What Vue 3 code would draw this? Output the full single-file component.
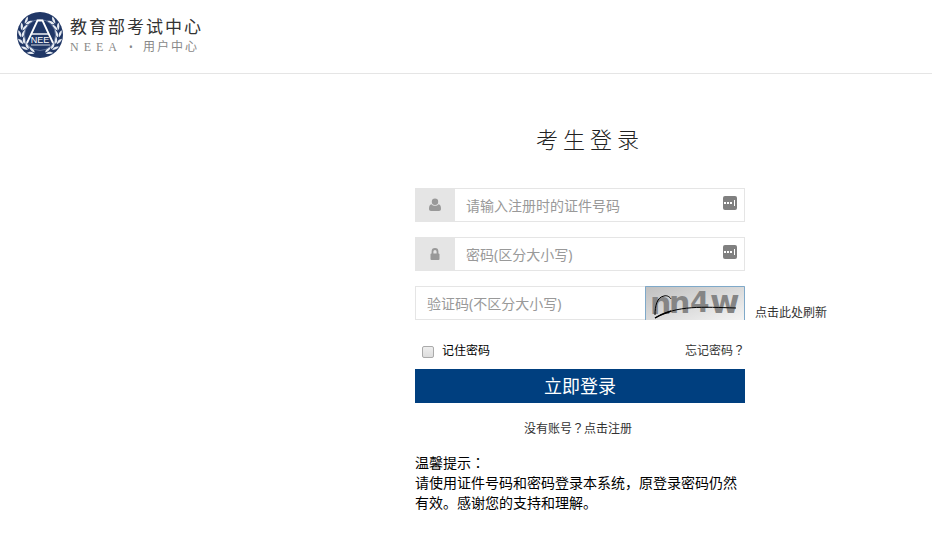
<script setup>
    import { ref } from 'vue';

    const account = ref('');
    const password = ref('');
    const captcha = ref('');
    const remember = ref(false);

    // leaves of the wreath, mirrored on both sides of the emblem
    const leaves = [-46, -24, -2, 20, 42, 64];
</script>

<template>
    <header class="header">
        <a class="brand" href="#">
            <svg class="emblem" viewBox="0 0 46 46" aria-hidden="true">
                <circle cx="23" cy="23" r="23" fill="#203766" />
                <g v-for="side in [1, -1]" :key="side" :transform="side == 1 ? '' : 'translate(46 0) scale(-1 1)'" fill="#e6ebf2">
                    <g v-for="angle in leaves" :key="angle" :transform="'rotate(' + angle + ' 23 23)'">
                        <path d="M41 26C38 24 38 21 38 18C40 20 42 22 41 26Z" />
                        <path d="M42 26C41 22 43 20 45 19C45 22 44 24 42 26Z" />
                    </g>
                </g>
                <circle cx="23" cy="23" r="15.5" fill="#203766" stroke="#6f80a5" stroke-width="0.8" />
                <path d="M10 31L20.5 8.5H25.5L36 31" fill="none" stroke="#fff" stroke-width="1.8" />
                <path d="M15 22H31" fill="none" stroke="#fff" stroke-width="1.4" />
                <path d="M14 33H33" fill="none" stroke="#fff" stroke-width="0.8" />
                <text class="emblem-text" x="23" y="31" text-anchor="middle">NEE</text>
            </svg>
            <span class="brand-text">
                <span class="brand-name">教育部考试中心</span>
                <span class="brand-sub"><span class="latin">NEEA</span><span class="dot">•</span><span class="cjk">用户中心</span></span>
            </span>
        </a>
    </header>

    <main class="page">
        <form class="login" @submit.prevent>
            <h1 class="title">考生登录</h1>

            <div class="field">
                <label class="addon" for="account" aria-label="证件号码">
                    <svg class="icon" viewBox="0 0 14 14"><circle cx="6" cy="3.8" r="3.2" /><path d="M2.5 6.2C4 8.2 8 8.2 9.5 6.2C11.5 6.5 12 8.5 12 11C12 12.2 11.2 13 10 13H2C.8 13 0 12.2 0 11C0 8.5 .5 6.5 2.5 6.2Z" /></svg>
                </label>
                <input id="account" v-model="account" type="text" placeholder="请输入注册时的证件号码">
                <svg class="manager" viewBox="0 0 14 14"><rect width="14" height="14" rx="2" /><path d="M1 6h2v2H1zM4 6h2v2H4zM7 6h2v2H7zM11 4h1v6h-1z" fill="#fff" /></svg>
            </div>

            <div class="field">
                <label class="addon" for="password" aria-label="密码">
                    <svg class="icon" viewBox="0 0 14 14"><path d="M3.5 7V4.5a2.5 2.5 0 0 1 5 0V7" fill="none" stroke="#999" stroke-width="1.8" /><rect x="1.5" y="6.5" width="9" height="6.5" rx="1" /></svg>
                </label>
                <input id="password" v-model="password" type="password" placeholder="密码(区分大小写)">
                <svg class="manager" viewBox="0 0 14 14"><rect width="14" height="14" rx="2" /><path d="M1 6h2v2H1zM4 6h2v2H4zM7 6h2v2H7zM11 4h1v6h-1z" fill="#fff" /></svg>
            </div>

            <div class="captcha-row">
                <div class="field">
                    <input v-model="captcha" type="text" aria-label="验证码" placeholder="验证码(不区分大小写)">
                    <svg class="captcha" viewBox="0 0 100 34">
                        <defs>
                            <linearGradient id="shade" x1="0" y1="0" x2="1" y2="1">
                                <stop offset="0" stop-color="#bfbfbf" />
                                <stop offset="1" stop-color="#f4f4f4" />
                            </linearGradient>
                        </defs>
                        <rect width="100" height="34" fill="url(#shade)" />
                        <path d="M.5 34V.5H99.5V34" fill="none" stroke="#7fa9c9" />
                        <g class="captcha-text">
                            <text x="5" y="28">n</text>
                            <text x="24" y="27">n</text>
                            <text class="digit" x="45" y="26">4</text>
                            <text class="wide" x="65" y="27">w</text>
                        </g>
                        <path d="M10 29C10 20 12 11 19 10C22 9 25 11 26 13" fill="none" stroke="#000" />
                        <path d="M10 32C32 19 58 21 91 22" fill="none" stroke="#000" />
                        <path d="M10 32C16 28 21 27 26 25" fill="none" stroke="#000" stroke-width="1.5" />
                    </svg>
                </div>
                <a class="refresh" href="#">点击此处刷新</a>
            </div>

            <div class="options">
                <label class="remember"><input v-model="remember" type="checkbox">记住密码</label>
                <a href="#">忘记密码<span class="mark">？</span></a>
            </div>

            <button class="submit" type="submit">立即登录</button>
            <p class="register"><a href="#">没有账号<span class="mark">？</span>点击注册</a></p>

            <div class="tips">
                <p>温馨提示<span class="mark">：</span></p>
                <p>请使用证件号码和密码登录本系统，原登录密码仍然有效。感谢您的支持和理解。</p>
            </div>
        </form>
    </main>
</template>

<style>
    body {
        background: #fff;
        font-family: "Noto Sans", "Noto Sans CJK SC", sans-serif;
        font-size: 12px;
        color: #000;
    }
</style>

<style scoped>
    * {
        box-sizing: border-box;
    }

    a {
        color: #333;
        text-decoration: none;
    }

    p {
        margin: 0;
    }

    /* full-width punctuation centred in its box */
    .mark {
        font-family: "Noto Sans CJK TC", sans-serif;
        line-height: 1;
    }

    .header {
        display: flex;
        padding: 12px 17px 15px;
        border-bottom: 1px solid #e5e5e5;
    }

    .brand {
        display: flex;
        gap: 7px;
    }

    .emblem {
        width: 46px;
        height: 46px;
    }

    .emblem-text {
        font: 9px "Liberation Sans", sans-serif;
        fill: #fff;
    }

    .brand-text {
        display: flex;
        flex-direction: column;
        padding-top: 4px;
    }

    .brand-name {
        font-size: 17px;
        line-height: 22px;
        letter-spacing: 2px;
        white-space: nowrap;
        color: #333;
    }

    .brand-sub {
        display: flex;
        gap: 7px;
        font-size: 12px;
        line-height: 18px;
        color: #888;
    }

    .brand-sub .latin {
        font-family: "Liberation Serif", serif;
        letter-spacing: 5px;
    }

    .brand-sub .dot {
        width: 7px;
        font-size: 10px;
    }

    .brand-sub .cjk {
        font-size: 12px;
        letter-spacing: 2px;
    }

    .page {
        display: flex;
        justify-content: flex-end;
        padding: 49px 187px 40px 20px;
    }

    .login {
        width: 330px;
    }

    .title {
        margin: 0 0 33px;
        padding-left: 20px;
        font-size: 22px;
        font-weight: 300;
        line-height: 32px;
        letter-spacing: 5px;
        text-align: center;
        color: #222;
    }

    .field {
        position: relative;
        display: flex;
        width: 100%;
        height: 34px;
        flex: none;
        margin-bottom: 15px;
        border: 1px solid #e5e5e5;
    }

    .field input {
        flex: 1;
        min-width: 0;
        padding: 0 11px;
        border: 0;
        outline: 0;
        background: transparent;
        font: inherit;
        font-size: 14px;
        color: #333;
    }

    .field input::placeholder {
        color: #999;
        opacity: 1;
    }

    .addon {
        display: flex;
        align-items: center;
        justify-content: center;
        width: 39px;
        background: #e5e5e5;
    }

    .icon {
        width: 14px;
        height: 14px;
        fill: #999;
    }

    .manager {
        position: absolute;
        top: 7px;
        right: 7px;
        width: 14px;
        height: 14px;
        fill: #808080;
    }

    .captcha-row {
        display: flex;
        align-items: flex-end;
    }

    .captcha {
        width: 100px;
        height: 34px;
        margin: -1px -1px -1px 0;
        overflow: visible;
    }

    .captcha-text {
        font: bold 30px "DejaVu Sans", sans-serif;
        fill: #858585;
    }

    .captcha-text .digit {
        font-size: 28px;
    }

    .captcha-text .wide {
        font-size: 32px;
    }

    .refresh {
        flex: none;
        margin: 0 0 13px 10px;
        line-height: 18px;
    }

    .options {
        display: flex;
        justify-content: space-between;
        padding: 7px 0 9px 7px;
        line-height: 18px;
    }

    .remember {
        display: flex;
        align-items: center;
        gap: 8px;
    }

    .remember input {
        appearance: none;
        width: 12px;
        height: 12px;
        margin: 2px 0 0;
        border: 1px solid #aaa;
        border-radius: 2px;
        background: linear-gradient(#eee, #ddd);
    }

    .remember input:checked {
        background: #003f7f;
    }

    .submit {
        display: block;
        width: 100%;
        height: 34px;
        padding: 0;
        border: 0;
        background: #003f7f;
        font: inherit;
        font-size: 18px;
        line-height: 34px;
        color: #fff;
        cursor: pointer;
    }

    .register {
        margin-top: 17px;
        padding-right: 4px;
        line-height: 18px;
        text-align: center;
    }

    .tips {
        margin-top: 15px;
        font-size: 14px;
        line-height: 20px;
    }
</style>
